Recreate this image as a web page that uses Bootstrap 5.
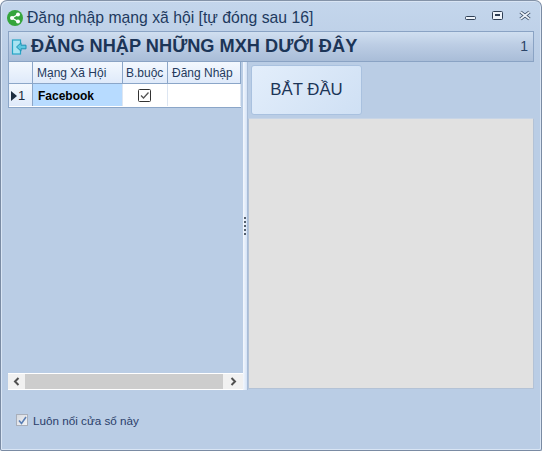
<!DOCTYPE html>
<html lang="vi">
<head>
<meta charset="utf-8">
<title>Đăng nhập mạng xã hội</title>
<link href="https://cdn.jsdelivr.net/npm/bootstrap@5.3.0/dist/css/bootstrap.min.css" rel="stylesheet">
<style>
html,body{margin:0;width:542px;height:451px;overflow:hidden;background:#fff}
body{font-family:"Liberation Sans",Arial,sans-serif;color:#15294b}
.win{width:542px;height:451px;background:#bacde5;border:1px solid #7a8ba3;border-top-color:#8493a8;border-radius:7px 7px 2px 2px;box-shadow:inset 1px 1px 0 #d9e5f4,inset -1px -1px 0 #d9e5f4;padding:0 7px 0 7px;overflow:hidden;background-image:linear-gradient(#c4d6ec 0,#bacde5 60px)}
.ttl{height:30px;padding-top:7px}
.ttl-ico{margin:2px 0 0 -1px;flex:none}
.ttl-text{font-size:15.75px;color:#1e3a5f;margin-left:4px;line-height:20px;white-space:nowrap}
.winbtns{margin-left:auto;gap:16px;padding-right:3px;padding-top:2px}
.hdrbar{height:31px;border:1px solid #8aa3c4;background:linear-gradient(#d0dff0 0,#bccde4 45%,#a9bdd8 100%);padding:0 5px 0 2px}
.hdr-t{font-size:18.2px;font-weight:700;color:#1c3557;margin-left:4px;white-space:nowrap}
.hdr-n{margin-left:auto;font-size:14px;color:#2b4468}
.mainrow{height:328px}
.leftp{width:235px;height:100%}
.dg{width:233px;height:46px;background:#fff;border-left:1px solid #8ba6c8;border-bottom:1px solid #8ba6c8;font-size:12px;color:#243a5c}
.dgr{height:22px}
.dgh{background:linear-gradient(#f3f8fe,#dfeafa);border-bottom:1px solid #8ba6c8}
.dgc{border-right:1px solid #8ba6c8;height:100%;padding-left:4px;padding-top:1px;white-space:nowrap;overflow:hidden}
.c0{width:24px;padding-left:0;background:linear-gradient(#f3f8fe,#dfeafa)}
.c1{width:90px}
.c2{width:45px;padding-left:3px}
.c3{width:73px}
.cell-sel{background:#b7dbff;color:#000;font-weight:700;font-size:12px;padding-left:5px;padding-top:2px}
.cellbd{border-right-color:#dde6f2}
.cellchk{margin-right:2px}
.rowmark{width:0;height:0;border-left:6px solid #1c2c40;border-top:5px solid transparent;border-bottom:5px solid transparent;margin:0 1px 0 2px}
.rownum{font-size:13px;color:#1c2c40}
.hsb{height:17px;width:235px;background:#f1f1f1;border-top:1px solid #fff;border-bottom:1px solid #fff}
.hsb-arr{width:17px;font-size:0}
.hsb-arr2{width:20px;font-size:0}
.hsb-th{flex:1;background:#cdcdcd;height:15px}
.split{width:5px;height:100%;background:linear-gradient(90deg,#f4f8fe,#d5e3f6);border-right:1px solid #a9bdd8}
.dot{width:2px;height:2px;background:#55606e;margin:1px 0 1px}
.rightp{width:286px;height:100%}
.startbtn{width:111px;height:50px;margin:3px 0 3px 3px;border:1px solid #a9c1df;border-radius:3px;background:linear-gradient(135deg,#e3eefb,#cfe0f4);color:#1c3557;font-size:16.8px;padding:0;display:block}
.graybox{height:271px;background:#e1e1e1;border:1px solid #b3c2d6;border-top-color:#c8d5e6}
.foot{height:60px;padding:24px 0 0 8px}
.chk{width:12px;height:12px;background:linear-gradient(135deg,#d5d9e0,#f4f5f7);border:1px solid #a9afba}
.chk-l{font-size:11.7px;color:#2a3e6a;margin-left:5px;line-height:13px}
</style>
</head>
<body>
<div class="win">
  <div class="ttl d-flex align-items-start">
    <svg class="ttl-ico" width="16" height="16" viewBox="0 0 16 16"><circle cx="8" cy="8" r="8" fill="#35a53c"/><path d="M11 4.5L5 8L11 11.5" stroke="#fff" stroke-width="1.4" fill="none"/><circle cx="11" cy="4.5" r="2" fill="#fff"/><circle cx="5" cy="8" r="2" fill="#fff"/><circle cx="11" cy="11.5" r="2" fill="#fff"/></svg>
    <span class="ttl-text">Đăng nhập mạng xã hội [tự đóng sau 16]</span>
    <div class="winbtns d-flex align-items-center">
      <svg width="11" height="11" viewBox="0 0 11 11"><rect x="0.5" y="6.5" width="10" height="3" rx="1" fill="#eef3fa" stroke="#2f3f55"/></svg>
      <svg width="11" height="11" viewBox="0 0 11 11"><rect x="0.5" y="1.5" width="10" height="8" rx="1" fill="#eef3fa" stroke="#2f3f55"/><rect x="3" y="4" width="5" height="2" fill="#2f3f55"/></svg>
      <svg width="12" height="11" viewBox="0 0 12 11"><path d="M1.5 2L10.5 9M10.5 2L1.5 9" stroke="#3a4a60" stroke-width="3.4"/><path d="M1.5 2L10.5 9M10.5 2L1.5 9" stroke="#eef3fa" stroke-width="1.6"/></svg>
    </div>
  </div>
  <div class="hdrbar d-flex align-items-center">
    <svg width="16" height="16" viewBox="0 0 16 16"><rect x="1.5" y="1" width="8" height="14" fill="#a9e4f2" stroke="#27a6c6" stroke-width="1.2"/><path d="M15 6.2H10V3.8L5.5 8L10 12.2V9.8H15Z" fill="#5cc8e2" stroke="#1f93b4"/></svg>
    <span class="hdr-t">ĐĂNG NHẬP NHỮNG MXH DƯỚI ĐÂY</span>
    <span class="hdr-n">1</span>
  </div>
  <div class="mainrow d-flex">
    <div class="leftp d-flex flex-column">
      <div class="dg">
        <div class="dgr dgh d-flex align-items-center">
          <div class="dgc c0"></div>
          <div class="dgc c1 d-flex align-items-center">Mạng Xã Hội</div>
          <div class="dgc c2 d-flex align-items-center">B.buộc</div>
          <div class="dgc c3 d-flex align-items-center">Đăng Nhập</div>
        </div>
        <div class="dgr d-flex align-items-center">
          <div class="dgc c0 d-flex align-items-center"><span class="rowmark"></span><span class="rownum">1</span></div>
          <div class="dgc c1 cell-sel cellbd d-flex align-items-center">Facebook</div>
          <div class="dgc c2 cellbd d-flex align-items-center justify-content-center p-0">
            <svg class="cellchk" width="13" height="13" viewBox="0 0 13 13"><rect x="0.5" y="0.5" width="12" height="12" rx="1" fill="#fff" stroke="#333"/><path d="M3 6.5L5.5 9L10.5 3.5" fill="none" stroke="#555" stroke-width="1.3"/></svg>
          </div>
          <div class="dgc c3 cellbd"></div>
        </div>
      </div>
      <div class="flex-grow-1"></div>
      <div class="hsb d-flex align-items-center">
        <div class="hsb-arr d-flex justify-content-center"><svg width="7" height="9" viewBox="0 0 7 9"><path d="M5.5 1L2 4.5L5.5 8" fill="none" stroke="#505050" stroke-width="2"/></svg></div>
        <div class="hsb-th"></div>
        <div class="hsb-arr2 d-flex justify-content-center"><svg width="7" height="9" viewBox="0 0 7 9"><path d="M1.5 1L5 4.5L1.5 8" fill="none" stroke="#505050" stroke-width="2"/></svg></div>
      </div>
    </div>
    <div class="split d-flex flex-column align-items-center justify-content-center">
      <div class="dot"></div><div class="dot"></div><div class="dot"></div><div class="dot"></div><div class="dot"></div>
    </div>
    <div class="rightp">
      <button type="button" class="btn startbtn">BẮT ĐẦU</button>
      <div class="graybox"></div>
    </div>
  </div>
  <div class="foot d-flex align-items-start">
    <div class="chk d-flex align-items-center justify-content-center"><svg width="9" height="9" viewBox="0 0 9 9"><path d="M1 4.5L3.5 7.5L8 1" fill="none" stroke="#5a7fb5" stroke-width="1.6"/></svg></div>
    <span class="chk-l">Luôn nổi cửa sổ này</span>
  </div>
</div>
<script src="https://cdn.jsdelivr.net/npm/bootstrap@5.3.0/dist/js/bootstrap.bundle.min.js"></script>
</body>
</html>
